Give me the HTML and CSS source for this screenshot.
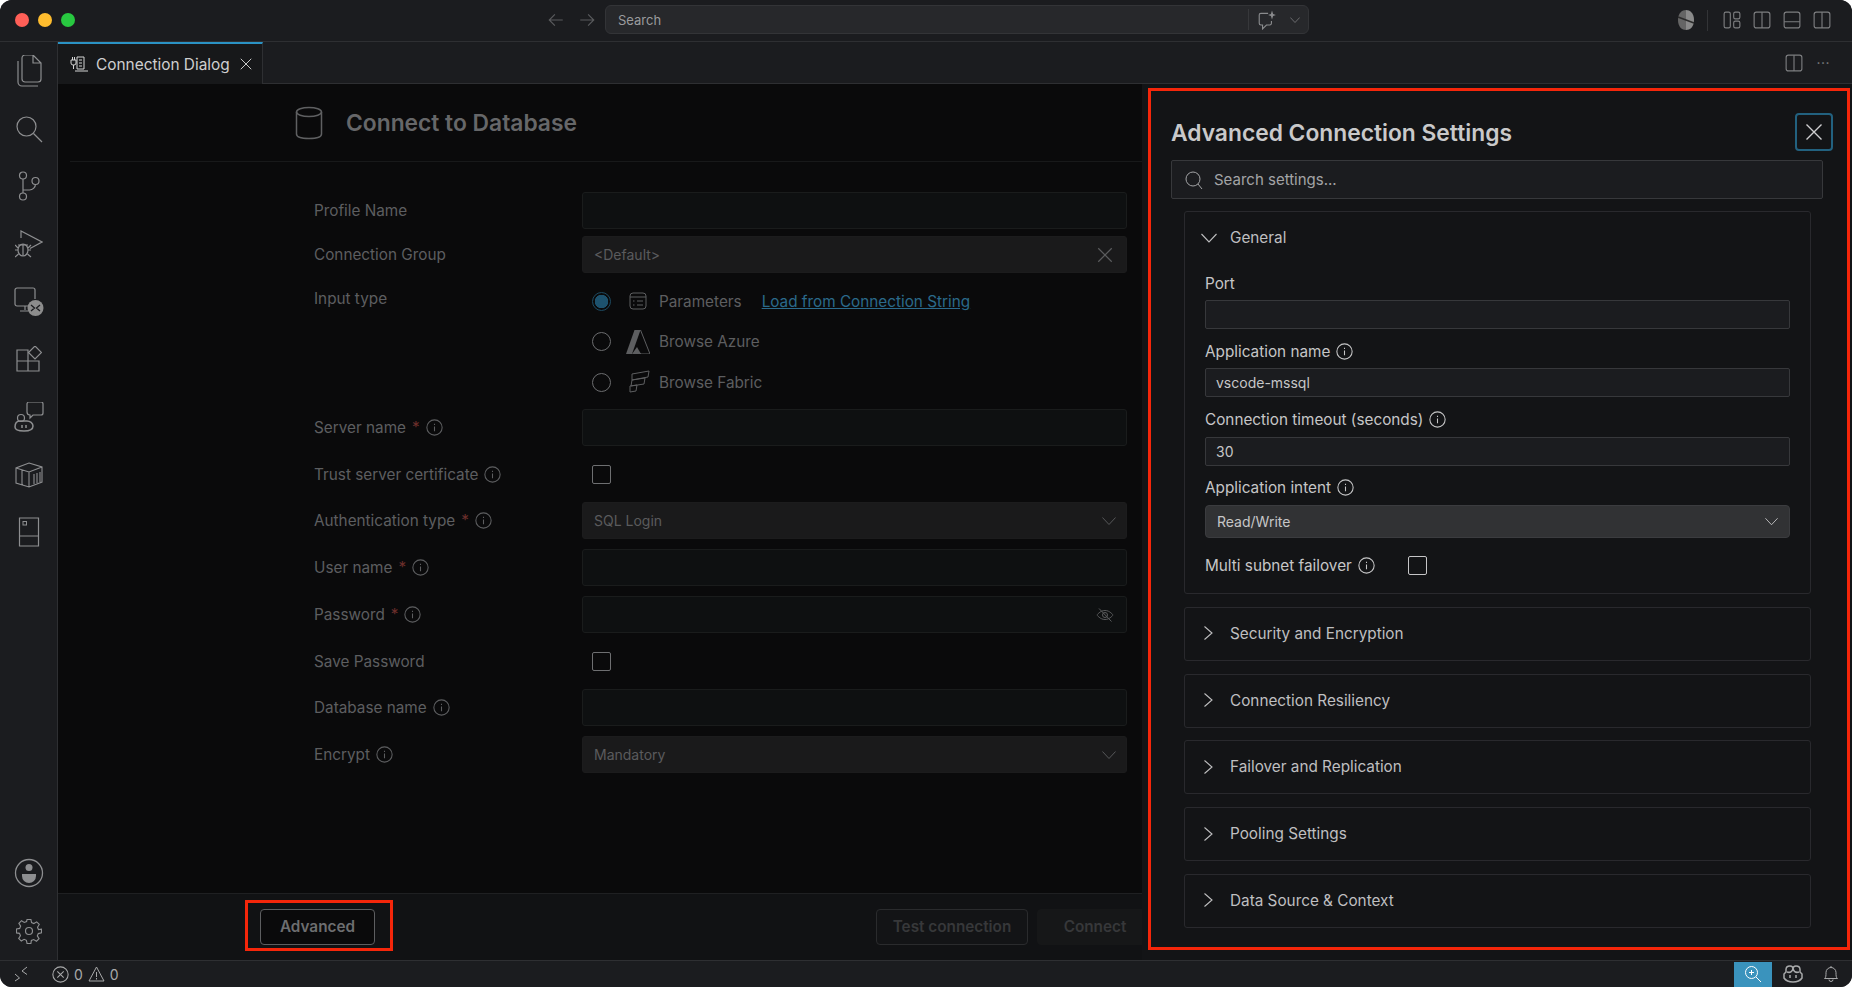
FILE: index.html
```html
<!DOCTYPE html>
<html lang="en">
<head>
    <meta charset="UTF-8">
    <title>Connection Dialog</title>
    <link rel="stylesheet" href="styles.css">
</head>
<body>
<svg class="sprites" width="0" height="0">
    <symbol id="i-info" viewBox="0 0 16 16"><circle cx="8" cy="8" r="7.2" fill="none" stroke="currentColor"/><path d="M8 7v4.5M8 4.4v1.2" fill="none" stroke="currentColor"/></symbol>
    <symbol id="i-right" viewBox="0 0 16 16"><path d="M3.500 1.500 11 8 3.500 14.500" fill="none" stroke="currentColor" stroke-width="1.100"/></symbol>
    <symbol id="i-down" viewBox="0 0 16 16"><path d="M0.500 4 8 12 15.500 4" fill="none" stroke="currentColor" stroke-width="1.100"/></symbol>
    <symbol id="i-close" viewBox="0 0 16 16"><path d="M2 2 14 14M14 2 2 14" fill="none" stroke="currentColor" stroke-width="1.100"/></symbol>
    <symbol id="i-split" viewBox="0 0 16 16"><rect x="1" y="1" width="14" height="14" rx="2" fill="none" stroke="currentColor"/><path d="M8 1v14" stroke="currentColor"/></symbol>
</svg>

<div class="window">
    <header class="titlebar">
        <div class="traffic">
            <span class="light red"></span>
            <span class="light yellow"></span>
            <span class="light green"></span>
        </div>
        <div class="nav-arrows">
            <svg width="18" height="18" viewBox="0 0 16 16"><path d="M14 8H2M7 3 2 8l5 5" fill="none" stroke="currentColor"/></svg>
            <svg width="18" height="18" viewBox="0 0 16 16"><path d="M2 8h12M9 3l5 5-5 5" fill="none" stroke="currentColor"/></svg>
        </div>
        <div class="command-center">
            <span class="command-text">Search</span>
            <span class="command-divider"></span>
            <svg class="command-chat" width="20" height="20" viewBox="0 0 18 18"><path d="M10 3H3.500A1.500 1.500 0 0 0 2 4.500V12a1.500 1.500 0 0 0 1.500 1.500H5V17l3.500-3.500h3A1.500 1.500 0 0 0 13 12V10" fill="none" stroke="currentColor"/><path d="M13.500 0.500 14.500 3.500 17 4.500 14.500 5.500 13.500 8.500 12.500 5.500 10 4.500 12.500 3.500Z" fill="currentColor"/></svg>
            <svg class="command-chevron" width="10" height="10"><use href="#i-down"/></svg>
        </div>
        <div class="title-actions">
            <svg class="shield" width="18" height="20" viewBox="0 0 18 20"><path d="M9 0C13 0 17 3 17 10S13 20 9 20Z" fill="#8a8a8a"/><path d="M9 0C5 0 1 3 1 10S5 20 9 20Z" fill="#656565"/><path d="M1 7 17 13" stroke="#2a2a2a" stroke-width="1.500" fill="none"/></svg>
            <span class="title-divider"></span>
            <svg width="18" height="18" viewBox="0 0 16 16"><rect x="1" y="1" width="5.500" height="14" rx="1.500" fill="none" stroke="currentColor"/><rect x="9.500" y="1" width="5.500" height="6" rx="1.500" fill="none" stroke="currentColor"/><rect x="9.500" y="9" width="5.500" height="6" rx="1.500" fill="none" stroke="currentColor"/></svg>
            <svg width="18" height="18"><use href="#i-split"/></svg>
            <svg width="18" height="18" viewBox="0 0 16 16"><rect x="1" y="1" width="14" height="14" rx="2" fill="none" stroke="currentColor"/><path d="M1 9.500h14" stroke="currentColor"/></svg>
            <svg width="18" height="18"><use href="#i-split"/></svg>
        </div>
    </header>

    <div class="workbench">
        <nav class="activitybar">
            <div class="activity-top">
                <div class="activity-item"><svg width="28" height="32" viewBox="0 0 28 32"><path d="M7 3a3 3 0 0 1 3-3h8l8 8v16a3 3 0 0 1-3 3H10a3 3 0 0 1-3-3ZM18 0v8h8" fill="none" stroke="currentColor" stroke-width="1.200"/><path d="M3 6v21a4 4 0 0 0 4 4h16" fill="none" stroke="currentColor" stroke-width="1.200"/></svg></div>
                <div class="activity-item"><svg width="28" height="28" viewBox="0 0 28 28"><circle cx="11.500" cy="11.500" r="9.500" fill="none" stroke="currentColor" stroke-width="1.200"/><path d="M18.500 18.500 27 27" fill="none" stroke="currentColor" stroke-width="1.300"/></svg></div>
                <div class="activity-item"><svg width="24" height="30" viewBox="0 0 24 30"><circle cx="6" cy="4.500" r="3.500" fill="none" stroke="currentColor" stroke-width="1.200"/><circle cx="6" cy="25.500" r="3.500" fill="none" stroke="currentColor" stroke-width="1.200"/><circle cx="18.500" cy="10" r="3.500" fill="none" stroke="currentColor" stroke-width="1.200"/><path d="M6 8v14M6 19h6a6 6 0 0 0 6.500-6" fill="none" stroke="currentColor" stroke-width="1.200"/></svg></div>
                <div class="activity-item"><svg width="28" height="28" viewBox="0 0 28 28"><path d="M6 8V1l21 11-12 6.500" fill="none" stroke="currentColor" stroke-width="1.200"/><ellipse cx="8" cy="20" rx="5" ry="6" fill="none" stroke="currentColor" stroke-width="1.200"/><path d="M3 15h10M8 14v12M0 15l3 3M16 15l-3 3M0 20h3M13 20h3M0 27l3.500-3M16 27l-3.500-3" fill="none" stroke="currentColor" stroke-width="1.200"/></svg></div>
                <div class="activity-item"><svg width="30" height="30" viewBox="0 0 30 30"><path d="M14 19H3a2 2 0 0 1-2-2V3a2 2 0 0 1 2-2h16a2 2 0 0 1 2 2v9M11 19v4M6 24h8" fill="none" stroke="currentColor" stroke-width="1.200"/><circle cx="21.500" cy="21" r="8" fill="#8c8c8c"/><path d="M17 18l3.500 3L17 24M26 18l-3.500 3 3.500 3" fill="none" stroke="#1b1c1f" stroke-width="1.300"/></svg></div>
                <div class="activity-item"><svg width="26" height="26" viewBox="0 0 26 26"><path d="M1 4h11v11h11v10H1ZM1 15h11v10" fill="none" stroke="currentColor" stroke-width="1.200"/><path d="M19 0l6.500 6.500L19 13l-6.500-6.500Z" fill="none" stroke="currentColor" stroke-width="1.200"/></svg></div>
                <div class="activity-item"><svg width="30" height="30" viewBox="0 0 30 30"><path d="M13 2a2 2 0 0 1 2-2h12a2 2 0 0 1 2 2v9a2 2 0 0 1-2 2H19l-3 3v-3a3 3 0 0 1-3-3Z" fill="none" stroke="currentColor" stroke-width="1.200"/><circle cx="7" cy="16" r="3.500" fill="none" stroke="currentColor" stroke-width="1.200"/><path d="M1 25c0-4 2-6 5-6h7c3 0 6 2 6 5s-3 5-9 5-9-1-9-4Z" fill="none" stroke="currentColor" stroke-width="1.500"/><path d="M8 23v3M12 23v3" stroke="currentColor" stroke-width="1.500"/></svg></div>
                <div class="activity-item"><svg width="28" height="26" viewBox="0 0 28 26"><path d="M14 1 27 5V20L14 25 1 21V6ZM1 6l13 4 13-5M14 10v15M7 8v15M19 12v10M22 11v10M25 10v10" fill="none" stroke="currentColor" stroke-width="1.100"/></svg></div>
                <div class="activity-item"><svg width="22" height="30" viewBox="0 0 22 30"><path d="M1.500 1h19v28h-19ZM1.500 19h19" fill="none" stroke="currentColor" stroke-width="1.200"/><rect x="5" y="4.500" width="3.500" height="3.500" fill="none" stroke="currentColor"/></svg></div>
            </div>
            <div class="activity-bottom">
                <div class="activity-item"><svg width="30" height="30" viewBox="0 0 30 30"><circle cx="15" cy="15" r="13.500" fill="none" stroke="currentColor" stroke-width="1.300"/><circle cx="15" cy="9.500" r="3.500" fill="currentColor"/><path d="M8 16h14v2a7 7 0 0 1-14 0Z" fill="currentColor"/></svg></div>
                <div class="activity-item"><svg width="26" height="26" viewBox="0 0 26 26"><circle cx="13" cy="13" r="3.500" fill="none" stroke="currentColor" stroke-width="1.200"/><path d="M11 1h4l.7 3.300 2.400 1 2.900-1.800 2.700 2.700-1.800 2.900 1 2.400L26 11v4l-3.300.7-1 2.400 1.800 2.900-2.700 2.700-2.900-1.800-2.400 1L15 26h-4l-.7-3.300-2.400-1-2.900 1.800-2.700-2.700 1.800-2.900-1-2.400L0 15v-4l3.300-.7 1-2.400L2.500 5l2.700-2.700 2.900 1.800 2.400-1Z" transform="translate(.5 .5) scale(.96)" fill="none" stroke="currentColor" stroke-width="1.200"/></svg></div>
            </div>
        </nav>

        <main class="editor">
            <div class="tabbar">
                <div class="tab">
                    <svg class="tab-icon" width="18" height="17" viewBox="0 0 18 17"><path d="M7 1h7v12H7ZM9 4h3M9 7h3M9 10h3M5 15h13" fill="none" stroke="#d4d4d4"/><path d="M1 4h5v3a2 2 0 0 1-2 2H3a2 2 0 0 1-2-2ZM2.500 1v3M4.500 1v3M3.500 9v4" fill="none" stroke="#d4d4d4"/></svg>
                    <span class="tab-label">Connection Dialog</span>
                    <svg class="tab-close" width="14" height="14"><use href="#i-close"/></svg>
                </div>
                <div class="tab-actions">
                    <svg width="18" height="18"><use href="#i-split"/></svg>
                    <span class="more">···</span>
                </div>
            </div>

            <div class="page">
                <div class="page-head">
                    <svg class="db-icon" width="28" height="34" viewBox="0 0 28 34"><ellipse cx="14" cy="6" rx="12.500" ry="4.500" fill="none" stroke="currentColor" stroke-width="1.500"/><path d="M1.500 6v22c0 3 5.500 4.500 12.500 4.500S26.500 31 26.500 28V6" fill="none" stroke="currentColor" stroke-width="1.500"/></svg>
                    <h1 class="page-title">Connect to Database</h1>
                </div>

                <form class="form">
                    <label class="field-label row-profile">Profile Name</label>
                    <div class="input row-profile"></div>

                    <label class="field-label row-group">Connection Group</label>
                    <div class="input filled row-group">
                        <span>&lt;Default&gt;</span>
                        <svg class="input-action" width="18" height="18"><use href="#i-close"/></svg>
                    </div>

                    <label class="field-label row-type">Input type</label>
                    <div class="radio-group">
                        <div class="radio-row">
                            <span class="radio checked"></span>
                            <svg class="radio-icon" width="20" height="20" viewBox="0 0 20 20"><rect x="2" y="2" width="16" height="16" rx="3" fill="none" stroke="currentColor"/><path d="M2 6h16M9 10h6M9 14h6M5 10h1.500M5 14h1.500" fill="none" stroke="currentColor"/></svg>
                            <span>Parameters</span>
                            <a class="link">Load from Connection String</a>
                        </div>
                        <div class="radio-row">
                            <span class="radio"></span>
                            <svg class="radio-icon" width="24" height="24" viewBox="0 0 24 24"><path d="M8.500 0h6L6 24H0Z" fill="currentColor"/><path d="M14.500 0 24 24H15L10 19" fill="none" stroke="currentColor"/><path d="M6 24h9l-4-7" fill="currentColor"/></svg>
                            <span>Browse Azure</span>
                        </div>
                        <div class="radio-row">
                            <span class="radio"></span>
                            <svg class="radio-icon" width="24" height="24" viewBox="0 0 24 24"><path d="M6 4 23 1l-1 6L6 10ZM6 10l13-2-1 6-13 2ZM4 16l7-1-1 6-6 1Z" fill="none" stroke="currentColor"/></svg>
                            <span>Browse Fabric</span>
                        </div>
                    </div>

                    <label class="field-label row-input">Server name <em>*</em> <svg class="info"><use href="#i-info"/></svg></label>
                    <div class="input row-input"></div>

                    <label class="field-label row-check">Trust server certificate <svg class="info"><use href="#i-info"/></svg></label>
                    <div class="check-cell row-check"><span class="checkbox"></span></div>

                    <label class="field-label row-input">Authentication type <em>*</em> <svg class="info"><use href="#i-info"/></svg></label>
                    <div class="input filled row-input">
                        <span>SQL Login</span>
                        <svg width="14" height="14"><use href="#i-down"/></svg>
                    </div>

                    <label class="field-label row-input">User name <em>*</em> <svg class="info"><use href="#i-info"/></svg></label>
                    <div class="input row-input"></div>

                    <label class="field-label row-input">Password <em>*</em> <svg class="info"><use href="#i-info"/></svg></label>
                    <div class="input row-input">
                        <span></span>
                        <svg class="input-action" width="18" height="18" viewBox="0 0 18 18"><path d="M1 9s3-4.500 8-4.500S17 9 17 9s-3 4.500-8 4.500S1 9 1 9ZM3 2.500l12.500 13" fill="none" stroke="currentColor"/><circle cx="9" cy="9" r="2.500" fill="none" stroke="currentColor"/></svg>
                    </div>

                    <label class="field-label row-check">Save Password</label>
                    <div class="check-cell row-check"><span class="checkbox"></span></div>

                    <label class="field-label row-input">Database name <svg class="info"><use href="#i-info"/></svg></label>
                    <div class="input row-input"></div>

                    <label class="field-label row-input">Encrypt <svg class="info"><use href="#i-info"/></svg></label>
                    <div class="input filled row-input">
                        <span>Mandatory</span>
                        <svg width="14" height="14"><use href="#i-down"/></svg>
                    </div>
                </form>

                <footer class="page-foot">
                    <button class="btn btn-advanced" type="button">Advanced</button>
                    <button class="btn btn-test" type="button">Test connection</button>
                    <button class="btn btn-connect" type="button">Connect</button>
                </footer>

                <span class="callout callout-advanced"></span>
            </div>

            <aside class="drawer">
                <div class="drawer-inner">
                    <div class="drawer-head">
                        <h2 class="drawer-title">Advanced Connection Settings</h2>
                        <button class="drawer-close" type="button"><svg width="20" height="20"><use href="#i-close"/></svg></button>
                    </div>
                    <div class="drawer-search">
                        <svg width="18" height="20" viewBox="0 0 18 20"><circle cx="8" cy="9" r="7" fill="none" stroke="currentColor"/><path d="M13 14l4 5" fill="none" stroke="currentColor"/></svg>
                        <span>Search settings...</span>
                    </div>
                    <div class="sections">
                        <section class="section">
                            <div class="section-head">
                                <svg width="16" height="16"><use href="#i-down"/></svg>
                                <span>General</span>
                            </div>
                            <div class="section-body">
                                <div class="setting">
                                    <label class="setting-label">Port</label>
                                    <div class="setting-input"></div>
                                </div>
                                <div class="setting">
                                    <label class="setting-label">Application name <svg class="info"><use href="#i-info"/></svg></label>
                                    <div class="setting-input">vscode-mssql</div>
                                </div>
                                <div class="setting">
                                    <label class="setting-label">Connection timeout (seconds) <svg class="info"><use href="#i-info"/></svg></label>
                                    <div class="setting-input">30</div>
                                </div>
                                <div class="setting">
                                    <label class="setting-label">Application intent <svg class="info"><use href="#i-info"/></svg></label>
                                    <div class="setting-select">
                                        <span>Read/Write</span>
                                        <svg width="13" height="13"><use href="#i-down"/></svg>
                                    </div>
                                </div>
                                <div class="setting-check">
                                    <label class="setting-label">Multi subnet failover <svg class="info"><use href="#i-info"/></svg></label>
                                    <span class="checkbox"></span>
                                </div>
                            </div>
                        </section>
                        <section class="section"><div class="section-head"><svg width="16" height="16"><use href="#i-right"/></svg><span>Security and Encryption</span></div></section>
                        <section class="section"><div class="section-head"><svg width="16" height="16"><use href="#i-right"/></svg><span>Connection Resiliency</span></div></section>
                        <section class="section"><div class="section-head"><svg width="16" height="16"><use href="#i-right"/></svg><span>Failover and Replication</span></div></section>
                        <section class="section"><div class="section-head"><svg width="16" height="16"><use href="#i-right"/></svg><span>Pooling Settings</span></div></section>
                        <section class="section"><div class="section-head"><svg width="16" height="16"><use href="#i-right"/></svg><span>Data Source &amp; Context</span></div></section>
                    </div>
                </div>
            </aside>
        </main>
    </div>

    <footer class="statusbar">
        <div class="status-left">
            <svg class="status-remote" width="14" height="16" viewBox="0 0 14 16"><path d="M1 8l4.500 4L1 15M13 1 8 5l5 3.500" fill="none" stroke="currentColor"/></svg>
            <svg class="status-error" width="17" height="17" viewBox="0 0 16 16"><circle cx="8" cy="8" r="7.200" fill="none" stroke="currentColor"/><path d="M5 5l6 6M11 5l-6 6" fill="none" stroke="currentColor"/></svg>
            <span>0</span>
            <svg width="17" height="16" viewBox="0 0 17 16"><path d="M8.500 1 16 15H1Z" fill="none" stroke="currentColor"/><path d="M8.500 6v5M8.500 12v1.500" fill="none" stroke="currentColor"/></svg>
            <span>0</span>
        </div>
        <div class="status-right">
            <span class="status-zoom"><svg width="18" height="18" viewBox="0 0 18 18"><circle cx="7.500" cy="7.500" r="6" fill="none" stroke="currentColor"/><path d="M12 12l5 5M7.500 5v5M5 7.500h5" fill="none" stroke="currentColor"/></svg></span>
            <svg class="status-copilot" width="20" height="18" viewBox="0 0 20 18"><path d="M3 7V4.500C3 2 5 1 7 1s3 1 3 3c0-2 1-3 3-3s4 1 4 3.500V7l2 2v4c-2 3-5 4-9 4s-7-1-9-4V9Z" fill="none" stroke="currentColor" stroke-width="1.500"/><path d="M7 10v3M13 10v3M4 7c3 1 5 0 6-3 1 3 3 4 6 3" fill="none" stroke="currentColor" stroke-width="1.500"/></svg>
            <svg class="status-bell" width="16" height="18" viewBox="0 0 16 18"><path d="M1.500 13.500c1.500-1 1.500-3 1.500-6a5 5 0 0 1 10 0c0 3 0 5 1.500 6ZM6 14.500a2 2 0 0 0 4 0M8 1v1.500" fill="none" stroke="currentColor"/></svg>
        </div>
    </footer>

    <span class="callout callout-drawer"></span>
</div>
</body>
</html>
```

FILE: styles.css
```css
* {
    box-sizing: border-box;
}

html,
body {
    margin: 0;
    padding: 0;
    height: 100%;
    overflow: hidden;
    background: #ffffff;
    font-family: Inter, "Noto Sans", sans-serif;
}

.sprites {
    position: absolute;
}

.window {
    position: relative;
    width: 1852px;
    height: 987px;
    background: #1b1c1f;
    border-radius: 12px;
    overflow: hidden;
    display: flex;
    flex-direction: column;
}

/* title bar */
.titlebar {
    height: 42px;
    flex: none;
    display: flex;
    align-items: center;
    background: #1b1c1f;
    border-bottom: 1px solid #2e2f32;
    padding-bottom: 1px;
    color: #5a5b5e;
}

.traffic {
    display: flex;
    gap: 9px;
    padding-left: 15px;
    width: 547px;
}

.light {
    width: 14px;
    height: 14px;
    border-radius: 50%;
}

.light.red { background: #ff5f57; }
.light.yellow { background: #febc2e; }
.light.green { background: #28c840; }

.nav-arrows {
    display: flex;
    gap: 13px;
    width: 58px;
}

.command-center {
    width: 704px;
    height: 29px;
    display: flex;
    align-items: center;
    background: #27282b;
    border: 1px solid #333437;
    border-radius: 6px;
    padding-left: 12px;
    color: #9a9b9d;
    font-size: 13px;
    margin-top: -1px;
}

.command-text {
    width: 630px;
}

.command-divider {
    width: 1px;
    height: 21px;
    background: #37383b;
}

.command-chat {
    margin-left: 8px;
    color: #8a8b8d;
}

.command-chevron {
    margin-left: 13px;
    color: #8a8b8d;
}

.title-actions {
    display: flex;
    align-items: center;
    margin-left: 368px;
    color: #7d7e80;
    gap: 12px;
}

.title-divider {
    width: 1px;
    height: 21px;
    background: #333437;
    margin: 0 3px 0 0;
}

/* activity bar */
.workbench {
    flex: 1;
    display: flex;
    min-height: 0;
}

.activitybar {
    width: 58px;
    flex: none;
    display: flex;
    flex-direction: column;
    justify-content: space-between;
    background: #1b1c1f;
    border-right: 1px solid #2e2f32;
    color: #8d8e90;
}

.activity-item {
    height: 57.7px;
    display: flex;
    align-items: center;
    justify-content: center;
}

/* editor */
.editor {
    position: relative;
    flex: 1;
    display: flex;
    flex-direction: column;
    min-width: 0;
}

.tabbar {
    height: 42px;
    flex: none;
    display: flex;
    justify-content: space-between;
    background: #1b1c1f;
    border-bottom: 1px solid #2e2f32;
}

.tab {
    width: 205px;
    height: 42px;
    display: flex;
    align-items: center;
    padding-left: 12px;
    background: #17181a;
    border-top: 2px solid #2b93c4;
    border-right: 1px solid #2e2f32;
    color: #cfcfd0;
    font-size: 15.4px;
}

.tab-label {
    margin-left: 8px;
    width: 143px;
    white-space: nowrap;
}

.tab-close {
    color: #d0d0d0;
}

.tab-actions {
    display: flex;
    align-items: center;
    gap: 13px;
    padding-right: 22px;
    color: #7d7e80;
}

.more {
    font-size: 14px;
    letter-spacing: 0.5px;
}

.page {
    position: relative;
    flex: 1;
    display: flex;
    flex-direction: column;
    background: #0a0a0b;
    min-height: 0;
}

.page-head {
    height: 78px;
    flex: none;
    margin: 0 0 0 12px;
    display: flex;
    align-items: center;
    padding-left: 225px;
    border-bottom: 1px solid #18191a;
    color: #5f6062;
}

.page-title {
    margin: 0 0 0 23px;
    font-size: 22.8px;
    font-weight: 600;
    color: #666769;
}

.form {
    flex: 1;
    display: grid;
    grid-template-columns: 268px 545px;
    grid-auto-rows: min-content;
    padding: 30px 0 0 256px;
    color: #5d5e60;
    font-size: 15.3px;
    align-content: start;
}

.field-label {
    display: flex;
    align-items: center;
    gap: 6px;
    white-space: nowrap;
    margin: 0;
}

.field-label em {
    font-style: normal;
    color: #6d2f2c;
}

.info {
    width: 17px;
    height: 17px;
    flex: none;
}

.input {
    height: 37px;
    display: flex;
    align-items: center;
    justify-content: space-between;
    padding: 0 10px 0 11px;
    background: #0e1011;
    border: 1px solid #1a1c1c;
    border-radius: 3px;
    font-size: 14px;
    color: #5a5b5d;
}

.input.filled {
    background: #1a1a1b;
    border-color: #1c1c1d;
}

.input-action {
    margin-right: 2px;
}

.field-label.row-profile,
.input.row-profile { height: 37px; margin-bottom: 7px; }
.field-label.row-group { height: 37px; }
.field-label.row-type { align-items: flex-start; margin-top: 16px; height: 120px; }
.field-label.row-input { height: 37px; margin-bottom: 10px; }
.input.row-input { margin-bottom: 10px; }
.field-label.row-check { height: 36px; margin-bottom: 10px; }
.check-cell.row-check { height: 36px; margin-bottom: 10px; display: flex; align-items: center; padding-left: 10px; }

.radio-group {
    display: flex;
    flex-direction: column;
    padding-left: 10px;
    margin-top: 8px;
    height: 128px;
}

.radio-row {
    height: 40.5px;
    flex: none;
    display: flex;
    align-items: center;
    color: #5d5e60;
}

.radio {
    width: 19px;
    height: 19px;
    border-radius: 50%;
    border: 1px solid #6c6d6f;
    margin-right: 15px;
    flex: none;
}

.radio.checked {
    border-color: #1d4a61;
    background: radial-gradient(circle, #1d526e 0 6.5px, transparent 7px);
}

.radio-icon {
    width: 24px;
    margin-right: 9px;
}

.link {
    margin-left: 20px;
    color: #2b6a8b;
    text-decoration: underline;
}

.checkbox {
    display: block;
    width: 19px;
    height: 19px;
    border: 1px solid #6e6f71;
    border-radius: 2px;
    flex: none;
}

.page-foot {
    height: 67px;
    flex: none;
    display: flex;
    align-items: center;
    background: #111214;
    border-top: 1px solid #1f2022;
    padding-left: 202px;
    padding-bottom: 1px;
}

.btn {
    height: 36px;
    font-family: inherit;
    font-size: 15.3px;
    font-weight: 600;
    color: #37383a;
    border-radius: 4px;
    border: 1px solid #2a2b2d;
    background: #131416;
    padding: 0;
}

.btn-advanced {
    width: 115px;
    background: #0a0a0b;
    border-color: #5d5e60;
    color: #6d6e70;
}

.btn-test {
    width: 152px;
    margin-left: 501px;
}

.btn-connect {
    width: 116px;
    flex: none;
    margin-left: 9px;
    background: #161718;
    border-color: #161718;
}

.callout {
    position: absolute;
    border: 3px solid #f5260a;
    pointer-events: none;
}

.callout-advanced {
    left: 187px;
    top: 816px;
    width: 148px;
    height: 51px;
}

.callout-drawer {
    left: 1148px;
    top: 88px;
    width: 702px;
    height: 862px;
}

/* advanced drawer */
.drawer {
    position: absolute;
    left: 1084px;
    top: 42px;
    width: 710px;
    height: 876px;
    background: #131416;
}

.drawer-inner {
    padding: 29px 29px 0 29px;
    display: flex;
    flex-direction: column;
}

.drawer-head {
    display: flex;
    align-items: center;
    justify-content: space-between;
    height: 38px;
    margin-right: -10px;
}

.drawer-title {
    margin: 0;
    font-size: 22.8px;
    font-weight: 600;
    color: #c9c9ca;
}

.drawer-close {
    width: 38px;
    height: 38px;
    display: flex;
    align-items: center;
    justify-content: center;
    padding: 0;
    background: transparent;
    border: 2px solid #22617f;
    border-radius: 4px;
    color: #cfcfd0;
}

.drawer-search {
    height: 39px;
    margin-top: 9px;
    display: flex;
    align-items: center;
    gap: 11px;
    padding-left: 13px;
    background: #1b1c1f;
    border: 1px solid #37383b;
    border-radius: 2px;
    color: #a3a4a6;
    font-size: 15px;
}

.sections {
    display: flex;
    flex-direction: column;
    gap: 12.75px;
    margin: 12px 12px 0 13px;
}

.section {
    border: 1px solid #29292d;
    border-radius: 3px;
}

.section-head {
    height: 52px;
    display: flex;
    align-items: center;
    gap: 13px;
    padding: 0 0 1px 16px;
    color: #bfbfc0;
    font-size: 15.3px;
}

.section-head svg {
    flex: none;
}

.section-body {
    padding: 9px 20px 0 20px;
    height: 329px;
}

.setting {
    height: 68.33px;
}

.setting-label {
    display: flex;
    align-items: center;
    gap: 6px;
    height: 20px;
    margin-bottom: 7px;
    color: #c6c6c7;
    font-size: 15.3px;
}

.setting-input {
    height: 29px;
    padding-left: 10px;
    display: flex;
    align-items: center;
    background: #1b1c1f;
    border: 1px solid #37383b;
    border-radius: 2px;
    color: #c6c6c7;
    font-size: 14px;
}

.setting-select {
    height: 33px;
    padding: 0 11px 0 11px;
    display: flex;
    align-items: center;
    justify-content: space-between;
    background: #313234;
    border: 1px solid #3b3c3f;
    border-radius: 4px;
    color: #c6c6c7;
    font-size: 14px;
}

.setting-check {
    display: flex;
    align-items: center;
    gap: 33px;
    margin-top: 9px;
}

.setting-check .setting-label {
    margin-bottom: 0;
}

.setting-check .checkbox {
    border-color: #c6c6c7;
}

/* status bar */
.statusbar {
    height: 27px;
    flex: none;
    display: flex;
    align-items: center;
    justify-content: space-between;
    background: #1b1c1f;
    border-top: 1px solid #2e2f32;
    color: #a8a9aa;
    font-size: 14px;
}

.status-left {
    display: flex;
    align-items: center;
    gap: 5px;
    padding-left: 14px;
}

.status-error {
    margin-left: 19px;
}

.status-right {
    display: flex;
    align-items: center;
    padding-right: 13px;
}

.status-zoom {
    width: 38px;
    height: 25px;
    display: flex;
    align-items: center;
    justify-content: center;
    background: #3a93bd;
    color: #ffffff;
}

.status-copilot {
    margin-left: 11px;
}

.status-bell {
    margin-left: 20px;
}
```
